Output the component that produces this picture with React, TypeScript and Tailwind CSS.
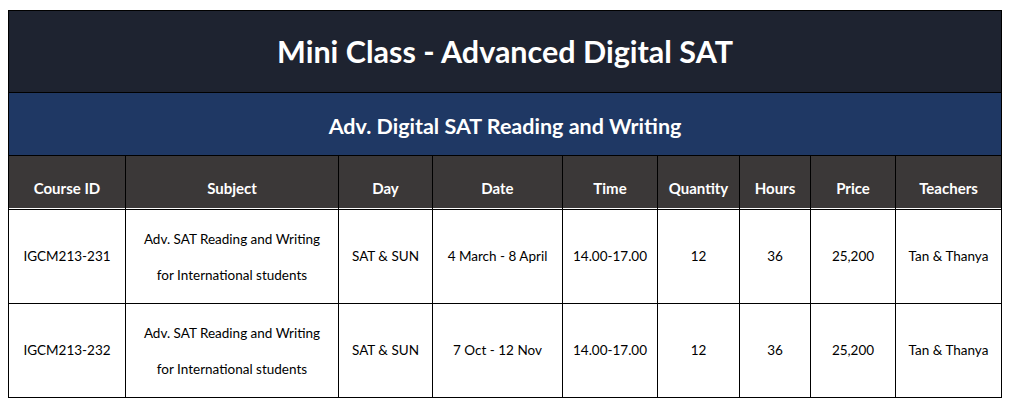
const COLS = [
  { label: 'Course ID', w: 'w-[117px]' },
  { label: 'Subject', w: 'w-[213px]' },
  { label: 'Day', w: 'w-[94px]' },
  { label: 'Date', w: 'w-[130px]' },
  { label: 'Time', w: 'w-[95px]' },
  { label: 'Quantity', w: 'w-[82px]' },
  { label: 'Hours', w: 'w-[71px]' },
  { label: 'Price', w: 'w-[85px]' },
  { label: 'Teachers', w: 'w-[106px]' },
]

const ROWS = [
  { id: 'IGCM213-231', date: '4 March - 8 April' },
  { id: 'IGCM213-232', date: '7 Oct - 12 Nov' },
]

const cell = 'border border-black text-center align-middle p-0'

export default function App() {
  return (
    <div className="min-h-screen bg-white pl-[8px] pt-[10px] font-['Lato','Open_Sans',sans-serif]">
      <table className="w-[993px] table-fixed border-collapse border border-black">
        <colgroup>
          {COLS.map((c) => (
            <col key={c.label} className={c.w} />
          ))}
        </colgroup>
        <thead>
          <tr>
            <th colSpan={9} className={`${cell} h-[82px] bg-[#1e2330] text-[30.5px] font-bold text-white`}>
              Mini Class - Advanced Digital SAT
            </th>
          </tr>
          <tr>
            <th colSpan={9} className={`${cell} h-[63px] bg-[#1f3864] pt-[5px] text-[21.5px] font-bold text-white`}>
              Adv. Digital SAT Reading and Writing
            </th>
          </tr>
          <tr>
            {COLS.map((c) => (
              <th
                key={c.label}
                className={`${cell} h-[54px] bg-[#3b3838] pt-[12px] text-[15px] font-bold text-white shadow-[inset_0_-1px_0_#fff]`}
              >
                {c.label}
              </th>
            ))}
          </tr>
        </thead>
        <tbody className="text-[13.5px] text-black">
          {ROWS.map((r) => (
            <tr key={r.id} className="h-[94px]">
              <td className={cell}>{r.id}</td>
              <td className={`${cell} leading-[36px]`}>
                Adv. SAT Reading and Writing
                <br />
                for International students
              </td>
              <td className={cell}>SAT &amp; SUN</td>
              <td className={cell}>{r.date}</td>
              <td className={cell}>14.00-17.00</td>
              <td className={cell}>12</td>
              <td className={cell}>36</td>
              <td className={cell}>25,200</td>
              <td className={cell}>Tan &amp; Thanya</td>
            </tr>
          ))}
        </tbody>
      </table>
    </div>
  )
}
